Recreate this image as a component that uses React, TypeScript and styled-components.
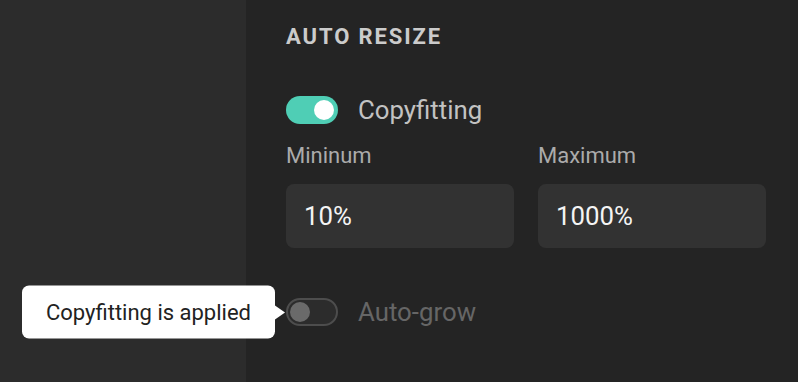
import React from "react";
import styled, { createGlobalStyle } from "styled-components";

const GlobalStyle = createGlobalStyle`
  html, body { margin: 0; padding: 0; background: #242424; }
  body { font-family: Roboto, "Liberation Sans", sans-serif; -webkit-font-smoothing: antialiased; }
  * { box-sizing: border-box; }
`;

const Layout = styled.div`
  display: flex;
  width: 798px;
  height: 382px;
  overflow: hidden;
`;

const Sidebar = styled.aside`
  width: 246px;
  flex: none;
  background: #2c2c2c;
`;

const Panel = styled.section`
  flex: 1;
  background: #242424;
  padding: 26px 32px 0 40px;
  display: flex;
  flex-direction: column;
`;

const Title = styled.h2`
  margin: 0;
  font-size: 22px;
  line-height: 22px;
  font-weight: 700;
  letter-spacing: 1.9px;
  color: #cbcbcb;
  text-transform: uppercase;
`;

const ToggleRow = styled.div<{ $mt: number }>`
  display: flex;
  align-items: center;
  gap: 20px;
  margin-top: ${(p) => p.$mt}px;
  height: 28px;
  position: relative;
`;

const Switch = styled.div<{ $on: boolean }>`
  position: relative;
  width: 52px;
  height: 28px;
  border-radius: 14px;
  flex: none;
  background: ${(p) => (p.$on ? "#4fceb5" : "#2c2c2c")};
  border: ${(p) => (p.$on ? "none" : "2px solid #4d4d4d")};
  &::after {
    content: "";
    position: absolute;
    top: 50%;
    width: 20px;
    height: 20px;
    border-radius: 50%;
    transform: translateY(-50%);
    background: ${(p) => (p.$on ? "#ffffff" : "#6a6a6a")};
    ${(p) => (p.$on ? "right: 4px;" : "left: 2px;")}
  }
`;

const ToggleLabel = styled.span<{ $on: boolean }>`
  font-size: 25.8px;
  line-height: 28px;
  color: ${(p) => (p.$on ? "#c2c2c2" : "#666666")};
`;

const Fields = styled.div`
  display: grid;
  grid-template-columns: 228px 228px;
  column-gap: 24px;
  margin-top: 21px;
`;

const Field = styled.div`
  display: flex;
  flex-direction: column;
  gap: 17px;
`;

const FieldLabel = styled.label`
  font-size: 22px;
  line-height: 22px;
  color: #ababab;
`;

const ValueBox = styled.div`
  height: 64px;
  border-radius: 8px;
  background: #323232;
  display: flex;
  align-items: center;
  padding: 0 18px;
  font-size: 25.8px;
  color: #f4f4f4;
`;

const Tooltip = styled.div`
  position: absolute;
  right: calc(100% + 11px);
  top: 50%;
  transform: translateY(-50%);
  height: 53px;
  padding: 0 24px;
  display: flex;
  align-items: center;
  white-space: nowrap;
  background: #ffffff;
  border-radius: 7px;
  font-size: 22px;
  color: #222222;
  &::after {
    content: "";
    position: absolute;
    left: 100%;
    top: 50%;
    transform: translateY(-50%);
    border-top: 7px solid transparent;
    border-bottom: 7px solid transparent;
    border-left: 10px solid #ffffff;
  }
`;

const SwitchWrap = styled.div`
  position: relative;
  display: flex;
`;

export default function App() {
  return (
    <>
      <GlobalStyle />
      <Layout>
        <Sidebar />
        <Panel>
          <Title>Auto Resize</Title>
          <ToggleRow $mt={48}>
            <Switch $on />
            <ToggleLabel $on>Copyfitting</ToggleLabel>
          </ToggleRow>
          <Fields>
            <Field>
              <FieldLabel>Mininum</FieldLabel>
              <ValueBox>10%</ValueBox>
            </Field>
            <Field>
              <FieldLabel>Maximum</FieldLabel>
              <ValueBox>1000%</ValueBox>
            </Field>
          </Fields>
          <ToggleRow $mt={50}>
            <SwitchWrap>
              <Tooltip>Copyfitting is applied</Tooltip>
              <Switch $on={false} />
            </SwitchWrap>
            <ToggleLabel $on={false}>Auto-grow</ToggleLabel>
          </ToggleRow>
        </Panel>
      </Layout>
    </>
  );
}
